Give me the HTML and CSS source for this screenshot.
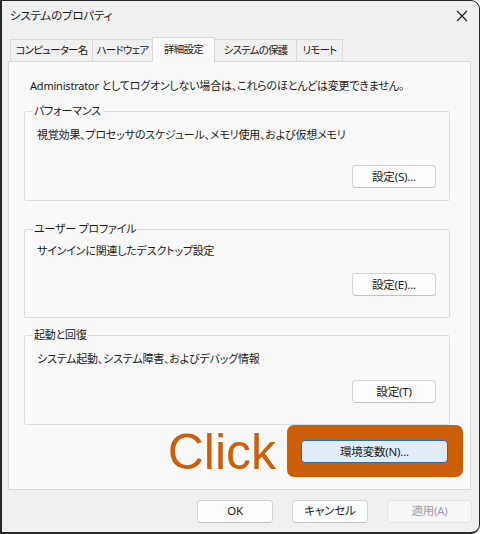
FILE: index.html
```html
<!DOCTYPE html>
<html lang="ja">
<head>
<meta charset="utf-8">
<title>システムのプロパティ</title>
<link rel="stylesheet" href="styles.css">
</head>
<body>
<div class="window">
  <div class="titlebar">
    <span class="title">システムのプロパティ</span>
    <span class="close">
      <svg width="12" height="12" viewBox="0 0 12 12"><path d="M1 1 L11 11 M11 1 L1 11" stroke="#1a1a1a" stroke-width="1.1" fill="none"/></svg>
    </span>
  </div>
  <div class="tabs">
    <div class="tab">コンピューター名</div>
    <div class="tab">ハードウェア</div>
    <div class="tab active">詳細設定</div>
    <div class="tab">システムの保護</div>
    <div class="tab">リモート</div>
  </div>
  <div class="panel">
    <p class="notice">Administrator としてログオンしない場合は、これらのほとんどは変更できません。</p>
    <fieldset class="group perf">
      <legend>パフォーマンス</legend>
      <p class="desc">視覚効果、プロセッサのスケジュール、メモリ使用、および仮想メモリ</p>
      <div class="row"><button class="btn">設定(S)...</button></div>
    </fieldset>
    <fieldset class="group profile">
      <legend>ユーザー プロファイル</legend>
      <p class="desc">サインインに関連したデスクトップ設定</p>
      <div class="row"><button class="btn">設定(E)...</button></div>
    </fieldset>
    <fieldset class="group startup">
      <legend>起動と回復</legend>
      <p class="desc">システム起動、システム障害、およびデバッグ情報</p>
      <div class="row"><button class="btn">設定(T)</button></div>
    </fieldset>
    <div class="env-row">
      <span class="click">Click</span>
      <div class="highlight"><button class="btn env">環境変数(N)...</button></div>
    </div>
  </div>
  <div class="footer">
    <button class="btn foot">OK</button>
    <button class="btn foot">キャンセル</button>
    <button class="btn foot apply" disabled>適用(A)</button>
  </div>
</div>
</body>
</html>
```
FILE: styles.css
```css
html, body {
  margin: 0;
  padding: 0;
  background: #ffffff;
}
body {
  font-family: "Noto Sans", "Noto Sans CJK JP", sans-serif;
  font-size: 11px;
  letter-spacing: -0.2px;
  color: #1a1a1a;
  font-feature-settings: "palt";
}
.window {
  box-sizing: border-box;
  width: 480px;
  height: 534px;
  background: #f0f0f0;
  border: 1px solid #262626;
  border-left-width: 2px;
  border-bottom-width: 2px;
  border-radius: 0 9px 9px 0;
  display: flex;
  flex-direction: column;
  overflow: hidden;
}
.titlebar {
  height: 30px;
  display: flex;
  align-items: center;
  justify-content: space-between;
  padding: 0 11px 0 8px;
}
.title {
  font-size: 11.5px;
  line-height: 16px;
}
.close {
  display: flex;
  width: 12px;
  height: 12px;
}
.tabs {
  display: flex;
  align-items: flex-end;
  height: 30px;
  padding-left: 8px;
  position: relative;
  z-index: 1;
}
.tab {
  box-sizing: border-box;
  height: 22px;
  line-height: 20px;
  font-size: 10.5px;
  letter-spacing: -0.8px;
  text-align: center;
  white-space: nowrap;
  border: 1px solid #d9d9d9;
  border-bottom: none;
  background: #f0f0f0;
  margin-left: -1px;
}
.tab:nth-child(1) { width: 83px; margin-left: 0; }
.tab:nth-child(2) { width: 61px; }
.tab:nth-child(3) { width: 63px; }
.tab:nth-child(4) { width: 83px; }
.tab:nth-child(5) { width: 47px; }
.tab.active {
  height: 25px;
  line-height: 22px;
  background: #f9f9f9;
  margin-bottom: -1px;
}
.panel {
  box-sizing: border-box;
  height: 429px;
  margin: 0 8px 0 6px;
  background: #f9f9f9;
  border: 1px solid #d9d9d9;
  padding: 0 20px 0 15px;
  display: flex;
  flex-direction: column;
}
.notice {
  margin: 16px 0 9px 6px;
  line-height: 16px;
}
.group {
  margin: 0;
  padding: 0 13px 0 12px;
  border: 1px solid #dcdcdc;
  border-radius: 2px;
  min-width: 0;
}
.group legend {
  padding: 0 1px;
  margin-left: -4px;
  line-height: 16px;
}
.desc {
  margin: 0;
  line-height: 16px;
}
.row {
  display: flex;
  justify-content: flex-end;
}
.perf .desc { margin-top: 8px; }
.perf .row { margin-top: 22px; margin-bottom: 12px; }
.profile { margin-top: 20px; }
.profile .desc { margin-top: 6px; }
.profile .row { margin-top: 14px; margin-bottom: 21px; }
.startup { margin-top: 9px; }
.startup .desc { margin-top: 8px; }
.startup .row { margin-top: 13px; margin-bottom: 21px; }
.btn {
  box-sizing: border-box;
  font-family: inherit;
  font-size: 11.5px;
  letter-spacing: -0.2px;
  font-feature-settings: "palt";
  color: #1a1a1a;
  background: #fdfdfd;
  border: 1px solid #d3d3d3;
  border-bottom-color: #c2c2c2;
  border-radius: 4px;
  height: 23px;
  width: 84px;
  padding: 0;
  line-height: 20px;
}
.env-row {
  display: flex;
  justify-content: flex-end;
  align-items: center;
  margin-top: -1px;
  margin-right: -13px;
}
.click {
  font-family: "Liberation Sans", Arial, sans-serif;
  font-size: 50px;
  letter-spacing: 0;
  line-height: 52px;
  color: #cd5f0b;
  margin-right: 11px;
  margin-top: 2px;
}
.highlight {
  background: #cd5f0b;
  border-radius: 7px;
  padding: 15px 15px 14px 14px;
  display: flex;
}
.btn.env {
  width: 147px;
  height: 23px;
  background: #e0ecf8;
  border: 1px solid #1f6fc0;
  border-radius: 4px;
}
.footer {
  flex: 1;
  display: flex;
  justify-content: flex-end;
  align-items: center;
  gap: 19px;
  padding-right: 7px;
}
.btn.foot {
  width: 76px;
  height: 23px;
}
.btn.apply {
  width: 85px;
  color: #a0a0a0;
  background: #f6f6f6;
  border-color: #e3e3e3;
}
```
